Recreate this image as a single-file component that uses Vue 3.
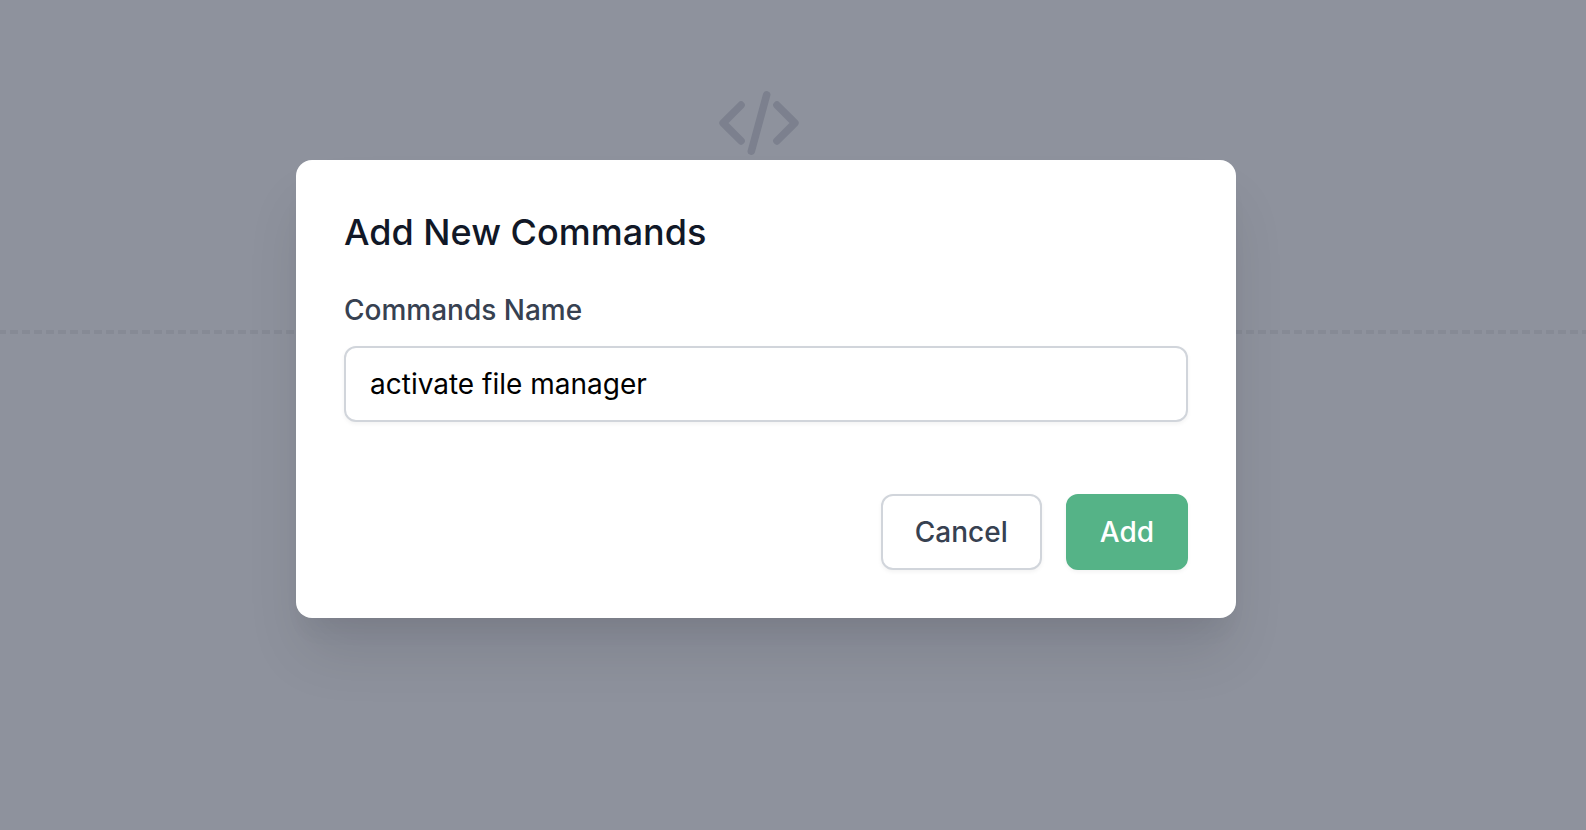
<script setup>
import { ref } from 'vue'

const commandName = ref('activate file manager')
</script>

<template>
  <div class="page">
    <main class="canvas" aria-hidden="true">
      <svg class="code-icon" viewBox="0 0 24 24" fill="none" stroke="currentColor" stroke-width="2.2" stroke-linecap="round" stroke-linejoin="round">
        <path d="M17.25 6.75L22.5 12l-5.25 5.25m-10.5 0L1.5 12l5.25-5.25m7.5-3l-4.5 16.5" />
      </svg>
      <div class="divider"></div>
    </main>

    <div class="overlay">
      <form class="dialog" role="dialog" aria-modal="true" aria-labelledby="dialog-title" @submit.prevent>
        <h1 id="dialog-title" class="title">Add New Commands</h1>
        <label class="label" for="command-name">Commands Name</label>
        <input id="command-name" v-model="commandName" class="field" type="text" autocomplete="off" spellcheck="false" />
        <div class="actions">
          <button class="button button-plain" type="button">Cancel</button>
          <button class="button button-primary" type="submit">Add</button>
        </div>
      </form>
    </div>
  </div>
</template>

<style>
body {
  margin: 0;
}
</style>

<style scoped>
.page {
  position: relative;
  min-height: 100vh;
  background: #8e929d;
  font-family: Inter, "Liberation Sans", sans-serif;
}

.canvas {
  display: flex;
  flex-direction: column;
  align-items: center;
  gap: 166px;
  padding-top: 82px;
}

.code-icon {
  width: 82px;
  height: 82px;
  margin-right: 68px;
  color: #7c808e;
}

.divider {
  width: 100%;
  height: 4px;
  background: repeating-linear-gradient(90deg, #868a95 0 8px, transparent 8px 12px);
  background-position-x: -2px;
}

.overlay {
  position: absolute;
  inset: 0;
  display: flex;
  justify-content: center;
  align-items: flex-start;
  padding: 160px 54px 48px 0;
}

.dialog {
  box-sizing: border-box;
  display: flex;
  flex-direction: column;
  width: 100%;
  max-width: 940px;
  padding: 48px;
  border-radius: 16px;
  background: #fff;
  box-shadow: 0 40px 60px -8px rgba(10, 0, 15, 0.11), 0 20px 24px -10px rgba(10, 0, 15, 0.05);
}

.title {
  margin: 0;
  color: #111827;
  font-size: 36px;
  font-weight: 500;
  line-height: 48px;
}

.label {
  margin-top: 34px;
  color: #374151;
  font-size: 28px;
  font-weight: 500;
  line-height: 40px;
}

.field {
  box-sizing: border-box;
  width: 100%;
  height: 76px;
  margin: 16px 0 0;
  padding: 16px 24px;
  border: 2px solid #d1d5db;
  border-radius: 12px;
  outline: none;
  background: #fff;
  box-shadow: 0 2px 4px rgba(0, 0, 0, 0.05);
  color: #000;
  font: 400 28px/40px Inter, "Liberation Sans", sans-serif;
}

.actions {
  display: flex;
  justify-content: flex-end;
  gap: 24px;
  margin-top: 72px;
}

.button {
  padding: 16px 32px;
  border: 2px solid transparent;
  border-radius: 12px;
  box-shadow: 0 2px 4px rgba(0, 0, 0, 0.05);
  font: 500 28px/40px Inter, "Liberation Sans", sans-serif;
  cursor: pointer;
}

.button-plain {
  border-color: #d1d5db;
  background: #fff;
  color: #374151;
}

.button-primary {
  border-color: #55b387;
  background: #55b387;
  color: #fff;
}
</style>
